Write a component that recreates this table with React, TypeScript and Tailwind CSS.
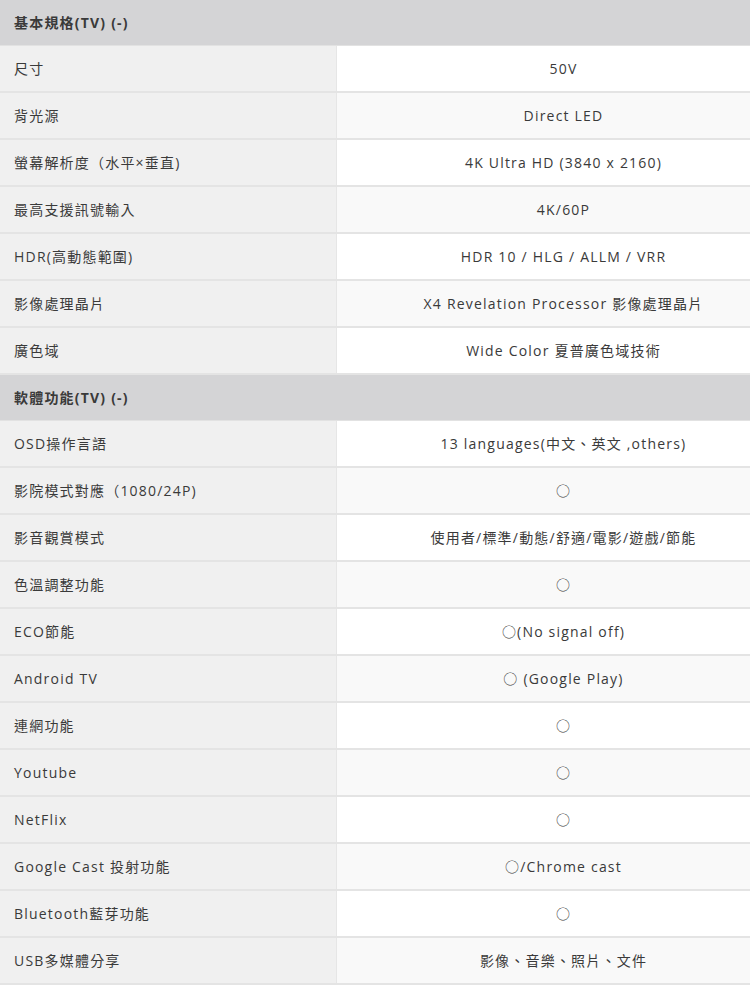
import React from 'react';

type Row = { label: string; value: string };
type Section = { title: string; rows: Row[] };

const sections: Section[] = [
    {
        title: '基本規格(TV) (-)',
        rows: [
            { label: '尺寸', value: '50V' },
            { label: '背光源', value: 'Direct LED' },
            { label: '螢幕解析度（水平×垂直)', value: '4K Ultra HD (3840 x 2160)' },
            { label: '最高支援訊號輸入', value: '4K/60P' },
            { label: 'HDR(高動態範圍)', value: 'HDR 10 / HLG / ALLM / VRR' },
            { label: '影像處理晶片', value: 'X4 Revelation Processor 影像處理晶片' },
            { label: '廣色域', value: 'Wide Color 夏普廣色域技術' },
        ],
    },
    {
        title: '軟體功能(TV) (-)',
        rows: [
            { label: 'OSD操作言語', value: '13 languages(中文、英文 ,others)' },
            { label: '影院模式對應（1080/24P)', value: '○' },
            { label: '影音觀賞模式', value: '使用者/標準/動態/舒適/電影/遊戲/節能' },
            { label: '色溫調整功能', value: '○' },
            { label: 'ECO節能', value: '○(No signal off)' },
            { label: 'Android TV', value: '○ (Google Play)' },
            { label: '連網功能', value: '○' },
            { label: 'Youtube', value: '○' },
            { label: 'NetFlix', value: '○' },
            { label: 'Google Cast 投射功能', value: '○/Chrome cast' },
            { label: 'Bluetooth藍芽功能', value: '○' },
            { label: 'USB多媒體分享', value: '影像、音樂、照片、文件' },
        ],
    },
];

export default function App() {
    return (
        <div className="w-[750px] bg-white text-[14px] tracking-[1.2px] text-[#3a3a3a] font-['Open_Sans','Noto_Sans_CJK_TC',sans-serif]">
            {sections.map((section) => (
                <div key={section.title}>
                    {/* section header */}
                    <div className="h-[46px] flex items-center px-[14px] bg-[#d4d4d6] border-b border-[#e2e2e2] font-bold">
                        {section.title}
                    </div>
                    {section.rows.map((row, i) => (
                        <div key={row.label} className="grid grid-cols-[337px_1fr] h-[47px] border-b-2 border-[#e4e4e4]">
                            <div className="flex items-center px-[14px] bg-[#f0f0f0] border-r border-[#e6e6e6]">{row.label}</div>
                            <div className={`flex items-center justify-center pl-[40px] ${i % 2 === 0 ? 'bg-white' : 'bg-[#f9f9f9]'}`}>
                                {row.value}
                            </div>
                        </div>
                    ))}
                </div>
            ))}
        </div>
    );
}
